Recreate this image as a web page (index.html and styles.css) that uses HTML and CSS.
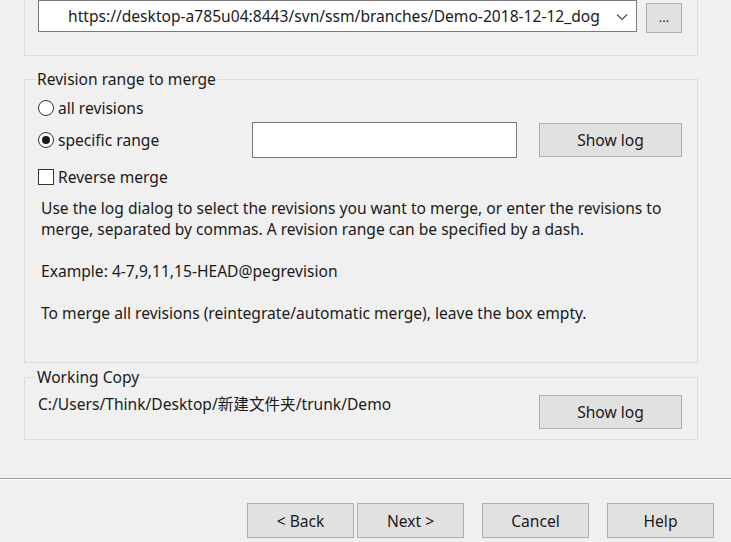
FILE: index.html
```html
<!DOCTYPE html>
<html>
<head>
<meta charset="utf-8">
<link rel="stylesheet" href="styles.css">
</head>
<body>
<div class="page">
  <div class="top-group">
    <div class="combo">
      <span class="combo-text">https://desktop-a785u04:8443/svn/ssm/branches/Demo-2018-12-12_dog</span>
      <svg class="combo-arrow" width="12" height="8" viewBox="0 0 12 8"><path d="M1 1.5 L6 6.5 L11 1.5" fill="none" stroke="#444" stroke-width="1.1"/></svg>
    </div>
    <div class="btn btn-dots">...</div>
  </div>

  <fieldset class="group rev-group">
    <legend>Revision range to merge</legend>
    <div class="opt-row">
      <span class="radio"></span><span>all revisions</span>
    </div>
    <div class="opt-row range-row">
      <div class="opt-label"><span class="radio checked"></span><span>specific range</span></div>
      <div class="text-input"></div>
      <div class="btn btn-log">Show log</div>
    </div>
    <div class="opt-row check-row">
      <span class="check"></span><span>Reverse merge</span>
    </div>
    <div class="para">
      <p>Use the log dialog to select the revisions you want to merge, or enter the revisions to merge, separated by commas. A revision range can be specified by a dash.</p>
      <p>Example: 4-7,9,11,15-HEAD@pegrevision</p>
      <p>To merge all revisions (reintegrate/automatic merge), leave the box empty.</p>
    </div>
  </fieldset>

  <fieldset class="group wc-group">
    <legend>Working Copy</legend>
    <div class="wc-row">
      <span class="wc-path">C:/Users/Think/Desktop/新建文件夹/trunk/Demo</span>
      <div class="btn btn-log">Show log</div>
    </div>
  </fieldset>
</div>
<div class="footer">
  <div class="btn btn-foot">&lt; Back</div>
  <div class="btn btn-foot btn-next">Next &gt;</div>
  <div class="btn btn-foot btn-cancel">Cancel</div>
  <div class="btn btn-foot btn-help">Help</div>
</div>
</body>
</html>
```

FILE: styles.css
```css
html, body {
  margin: 0;
  padding: 0;
  background: #f0f0f0;
  overflow: hidden;
}
body {
  width: 731px;
  height: 542px;
  font-family: "Noto Sans", "Noto Sans CJK SC", sans-serif;
  font-size: 15.6px;
  color: #1a1a1a;
}
.page {
  padding: 0 33px 0 24px;
}
.top-group {
  margin-top: -12px;
  border: 1px solid #dcdcdc;
  padding: 11px 15px 22px 13px;
  display: flex;
  align-items: flex-start;
  gap: 9px;
}
.combo {
  width: 595px;
  height: 30px;
  border: 1px solid #7a7a7a;
  background: #fff;
  display: flex;
  align-items: center;
  justify-content: space-between;
  padding: 0 8px 0 29px;
  box-sizing: content-box;
}
.combo-arrow {
  margin-top: 1px;
}
.btn {
  box-sizing: border-box;
  border: 1px solid #adadad;
  background: #e1e1e1;
  display: flex;
  align-items: center;
  justify-content: center;
  color: #1a1a1a;
}
.btn-dots {
  width: 38px;
  height: 30px;
  margin-top: 3px;
  font-size: 13px;
  padding-bottom: 2px;
}
.group {
  margin: 0;
  border: 1px solid #dcdcdc;
  padding: 0 15px 0 13px;
  min-width: 0;
}
.group legend {
  padding: 0 1px;
  margin-left: -2px;
  line-height: 18px;
  height: 18px;
  color: #1a1a1a;
}
.rev-group {
  margin-top: 14px;
  padding-bottom: 38px;
}
.opt-row {
  display: flex;
  align-items: center;
  gap: 4px;
  line-height: 20px;
}
.rev-group .opt-row:first-of-type {
  margin-top: 10px;
  height: 20px;
}
.range-row {
  margin-top: 4px;
  height: 36px;
  gap: 0;
}
.opt-label {
  display: flex;
  align-items: center;
  gap: 4px;
  width: 214px;
}
.radio {
  width: 14px;
  height: 14px;
  border: 1px solid #333;
  border-radius: 50%;
  background: #fff;
  position: relative;
  flex: none;
}
.radio.checked::after {
  content: "";
  position: absolute;
  left: 3px;
  top: 3px;
  width: 8px;
  height: 8px;
  border-radius: 50%;
  background: #1a1a1a;
}
.check {
  width: 14px;
  height: 14px;
  border: 1px solid #333;
  background: #fff;
  flex: none;
}
.text-input {
  width: 263px;
  height: 34px;
  border: 1px solid #7a7a7a;
  background: #fff;
  flex: none;
}
.btn-log {
  width: 143px;
  height: 34px;
  margin-left: 22px;
  flex: none;
}
.check-row {
  margin-top: 9px;
  height: 20px;
}
.para {
  margin-top: 11px;
  padding-left: 3px;
  line-height: 21px;
}
.para p {
  margin: 0 0 21px 0;
}
.para p:last-child {
  margin-bottom: 0;
}
.wc-group {
  margin-top: 5px;
  padding: 0 15px 10px 13px;
}
.wc-row {
  display: flex;
  justify-content: space-between;
  align-items: flex-start;
  margin-top: 9px;
}
.wc-path {
  line-height: 18px;
}
.footer {
  margin-top: 38px;
  border-top: 1px solid #a0a0a0;
  box-shadow: inset 0 1px 0 #fff;
  display: flex;
  padding: 24px 17px 0 247px;
}
.btn-foot {
  width: 107px;
  height: 35px;
}
.btn-next {
  margin-left: 3px;
}
.btn-cancel {
  margin-left: 18px;
}
.btn-help {
  margin-left: 18px;
}
```
